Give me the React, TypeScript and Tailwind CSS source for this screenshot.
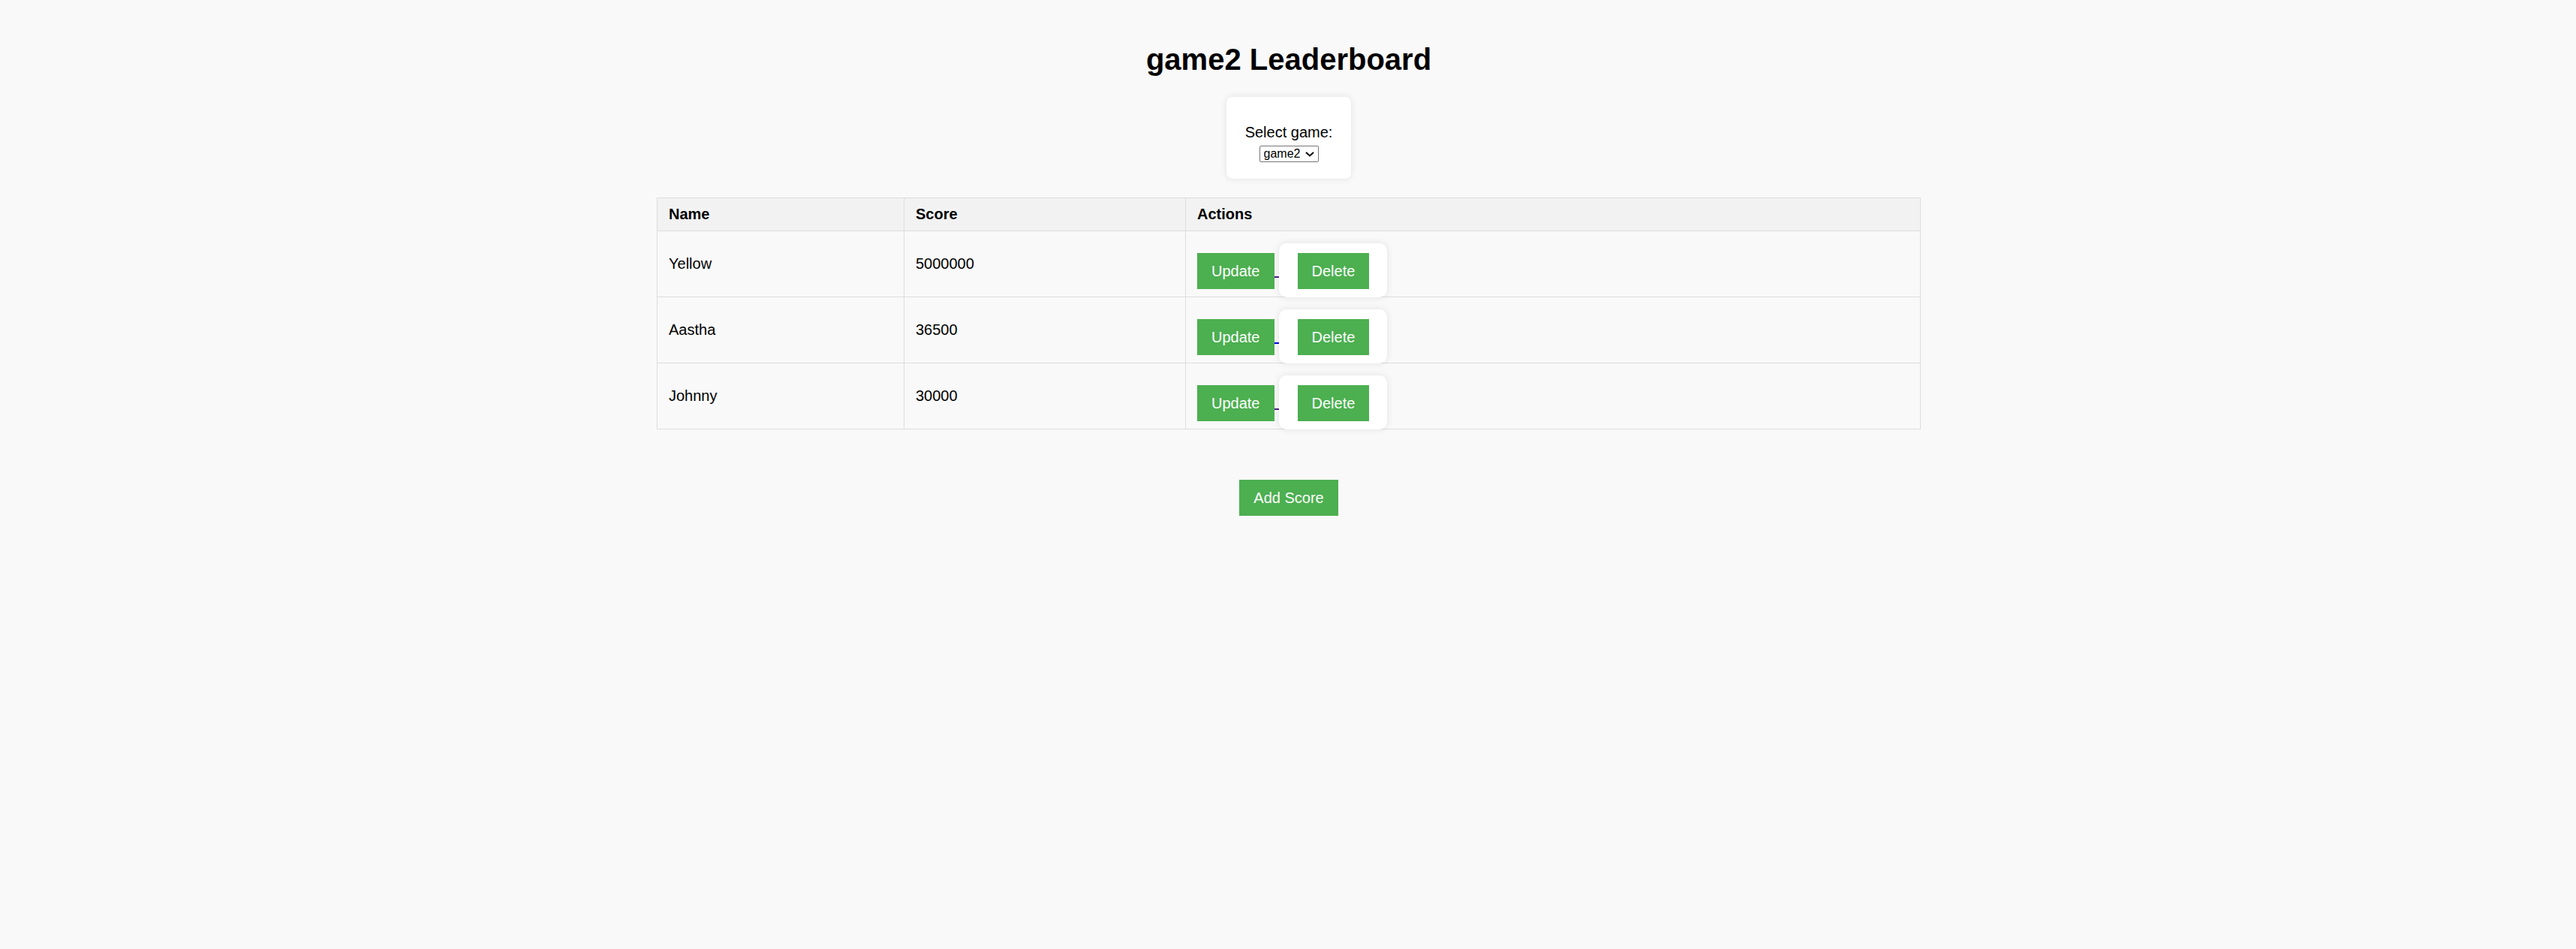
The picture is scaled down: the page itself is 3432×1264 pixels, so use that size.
import { useState } from 'react';

type Entry = { name: string; score: number; visited: boolean };

const scores: Entry[] = [
  { name: 'Yellow', score: 5000000, visited: true },
  { name: 'Aastha', score: 36500, visited: false },
  { name: 'Johnny', score: 30000, visited: true },
];

export default function App() {
  const [game, setGame] = useState('game2');

  return (
    <div className="min-h-[1264px] bg-[#f9f9f9] pl-[2px] text-black font-['Liberation_Sans',Arial,sans-serif] text-[20px]">
      <h1 className="pt-[56px] text-center text-[40px] leading-[46px] font-bold">{game} Leaderboard</h1>

      <div className="mx-auto mt-[27px] h-[109px] w-[166px] rounded-[8px] bg-white pt-[36px] text-center shadow-[0_0_10px_rgba(0,0,0,0.1)]">
        <label className="block leading-[23px]">Select game:</label>
        <div className="relative mt-[2px] inline-block">
          <select
            value={game}
            onChange={(e) => setGame(e.target.value)}
            className="block h-[22px] w-[79px] appearance-none rounded-[2px] border border-[#767676] bg-white pl-[5px] text-left text-[16px] leading-[20px]"
          >
            <option value="game1">game1</option>
            <option value="game2">game2</option>
          </select>
          <svg
            className="pointer-events-none absolute right-[6px] top-[8px]"
            width="12"
            height="7"
            viewBox="0 0 12 7"
            fill="none"
            stroke="#000"
            strokeWidth="2"
          >
            <path d="M1 1 L6 5.5 L11 1" />
          </svg>
        </div>
      </div>

      <table className="mx-auto mt-[25px] w-[1684px] table-fixed border-collapse">
        <colgroup>
          <col className="w-[329px]" />
          <col className="w-[375px]" />
          <col />
        </colgroup>
        <thead>
          <tr className="h-[44px] bg-[#f2f2f2]">
            <th className="border border-[#ddd] px-[15px] text-left font-bold leading-[23px]">Name</th>
            <th className="border border-[#ddd] px-[15px] text-left font-bold leading-[23px]">Score</th>
            <th className="border border-[#ddd] px-[15px] text-left font-bold leading-[23px]">Actions</th>
          </tr>
        </thead>
        <tbody>
          {scores.map((s) => (
            <tr key={s.name} className="h-[88px]">
              <td className="border border-[#ddd] px-[15px] leading-[23px]">{s.name}</td>
              <td className="border border-[#ddd] px-[15px] leading-[23px]">{s.score}</td>
              <td className="border border-[#ddd] p-0 align-top">
                <div className="flex h-[87px] items-start pl-[15px] pt-[16px]">
                  <button className="mt-[13px] bg-[#4CAF50] px-[19px] py-[12px] leading-[24px] text-white">Update</button>
                  <span className={`mt-[44px] h-[2px] w-[6px] ${s.visited ? 'bg-[#551a8b]' : 'bg-[#0000ee]'}`} />
                  <div className="relative rounded-[10px] bg-white pb-[11px] pl-[25px] pr-[24px] pt-[13px] shadow-[0_0_10px_rgba(0,0,0,0.1)]">
                    <button className="bg-[#4CAF50] px-[19px] py-[12px] leading-[24px] text-white">Delete</button>
                  </div>
                </div>
              </td>
            </tr>
          ))}
        </tbody>
      </table>

      <div className="mt-[67px] flex justify-center">
        <button className="bg-[#4CAF50] px-[19px] py-[12px] leading-[24px] text-white">Add Score</button>
      </div>
    </div>
  );
}
